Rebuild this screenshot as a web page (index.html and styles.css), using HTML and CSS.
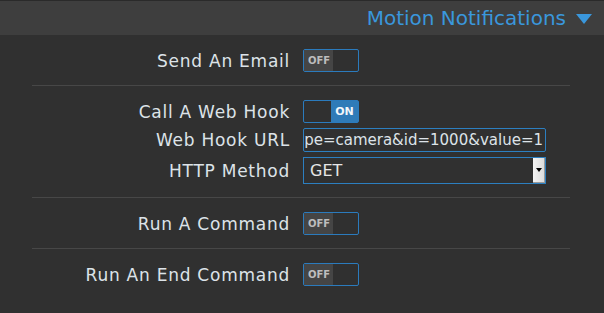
FILE: index.html
```html
<!DOCTYPE html>
<html>
<head>
<meta charset="utf-8">
<link rel="stylesheet" href="styles.css">
</head>
<body>
<div class="header">
  <span class="title">Motion Notifications</span>
  <span class="caret"></span>
</div>
<div class="form">
  <div class="section">
    <div class="row">
      <div class="label">Send An Email</div>
      <div class="toggle"><span class="half off-on">OFF</span><span class="half"></span></div>
    </div>
  </div>
  <div class="section">
    <div class="row">
      <div class="label">Call A Web Hook</div>
      <div class="toggle"><span class="half"></span><span class="half on">ON</span></div>
    </div>
    <div class="row">
      <div class="label">Web Hook URL</div>
      <div class="input"><span class="input-text">ype=camera&amp;id=1000&amp;value=1</span></div>
    </div>
    <div class="row">
      <div class="label">HTTP Method</div>
      <div class="select"><span class="select-text">GET</span><span class="select-btn"><span class="select-arrow"></span></span></div>
    </div>
  </div>
  <div class="section">
    <div class="row">
      <div class="label">Run A Command</div>
      <div class="toggle"><span class="half off-on">OFF</span><span class="half"></span></div>
    </div>
  </div>
  <div class="section last">
    <div class="row">
      <div class="label">Run An End Command</div>
      <div class="toggle"><span class="half off-on">OFF</span><span class="half"></span></div>
    </div>
  </div>
</div>
</body>
</html>
```
FILE: styles.css
```css
html, body {
  margin: 0;
  padding: 0;
  background: #303030;
  font-family: "DejaVu Sans", sans-serif;
}
.header {
  height: 35px;
  background: #3e3e3e;
  border-top: 1px solid #2a2a2a;
  box-sizing: border-box;
  display: flex;
  align-items: center;
  justify-content: flex-end;
  padding-right: 12px;
}
.title {
  color: #3a97dc;
  font-size: 20px;
}
.caret {
  width: 0;
  height: 0;
  border-left: 8px solid transparent;
  border-right: 8px solid transparent;
  border-top: 10px solid #3a97dc;
  margin-left: 10px;
  margin-top: 1px;
}
.form {
  margin: 0 34px 0 32px;
}
.section {
  padding: 14px 0 13px;
  border-bottom: 1px solid #474747;
  display: flex;
  flex-direction: column;
  gap: 5px;
}
.section.last {
  border-bottom: none;
}
.row {
  display: flex;
  align-items: center;
  gap: 13px;
}
.label {
  width: 258px;
  text-align: right;
  color: #dde3e8;
  font-size: 17px;
  letter-spacing: 0.75px;
  line-height: 20px;
}
.toggle {
  width: 56px;
  height: 23px;
  box-sizing: border-box;
  border: 1px solid #2b7bbd;
  border-radius: 2px;
  display: flex;
}
.half {
  flex: 1;
  display: flex;
  align-items: center;
  justify-content: center;
  font-size: 10px;
  font-weight: bold;
}
.off-on {
  background: #454545;
  color: #bdbdbd;
  justify-content: flex-start;
  padding-left: 4px;
}
.on {
  background: #2f7bb8;
  color: #f2f6fa;
  font-size: 11px;
}
.input {
  width: 243px;
  height: 24px;
  box-sizing: border-box;
  border: 1px solid #2c7fc0;
  border-radius: 2px;
  overflow: hidden;
  display: flex;
  justify-content: flex-end;
  align-items: center;
  padding-right: 2px;
}
.input-text {
  white-space: nowrap;
  color: #dde3e8;
  font-size: 15px;
}
.select {
  width: 243px;
  height: 27px;
  box-sizing: border-box;
  border: 1px solid #2c7fc0;
  display: flex;
  align-items: stretch;
  justify-content: space-between;
}
.select-text {
  color: #e6e6e6;
  font-size: 16px;
  padding-left: 6px;
  display: flex;
  align-items: center;
}
.select-btn {
  width: 11px;
  background: linear-gradient(to right, #f4f4f4, #dcdcdc);
  border-right: 1px solid #9a9a9a;
  border-bottom: 1px solid #9a9a9a;
  display: flex;
  align-items: center;
  justify-content: center;
}
.select-arrow {
  width: 0;
  height: 0;
  border-left: 3px solid transparent;
  border-right: 3px solid transparent;
  border-top: 4px solid #000;
}
```
